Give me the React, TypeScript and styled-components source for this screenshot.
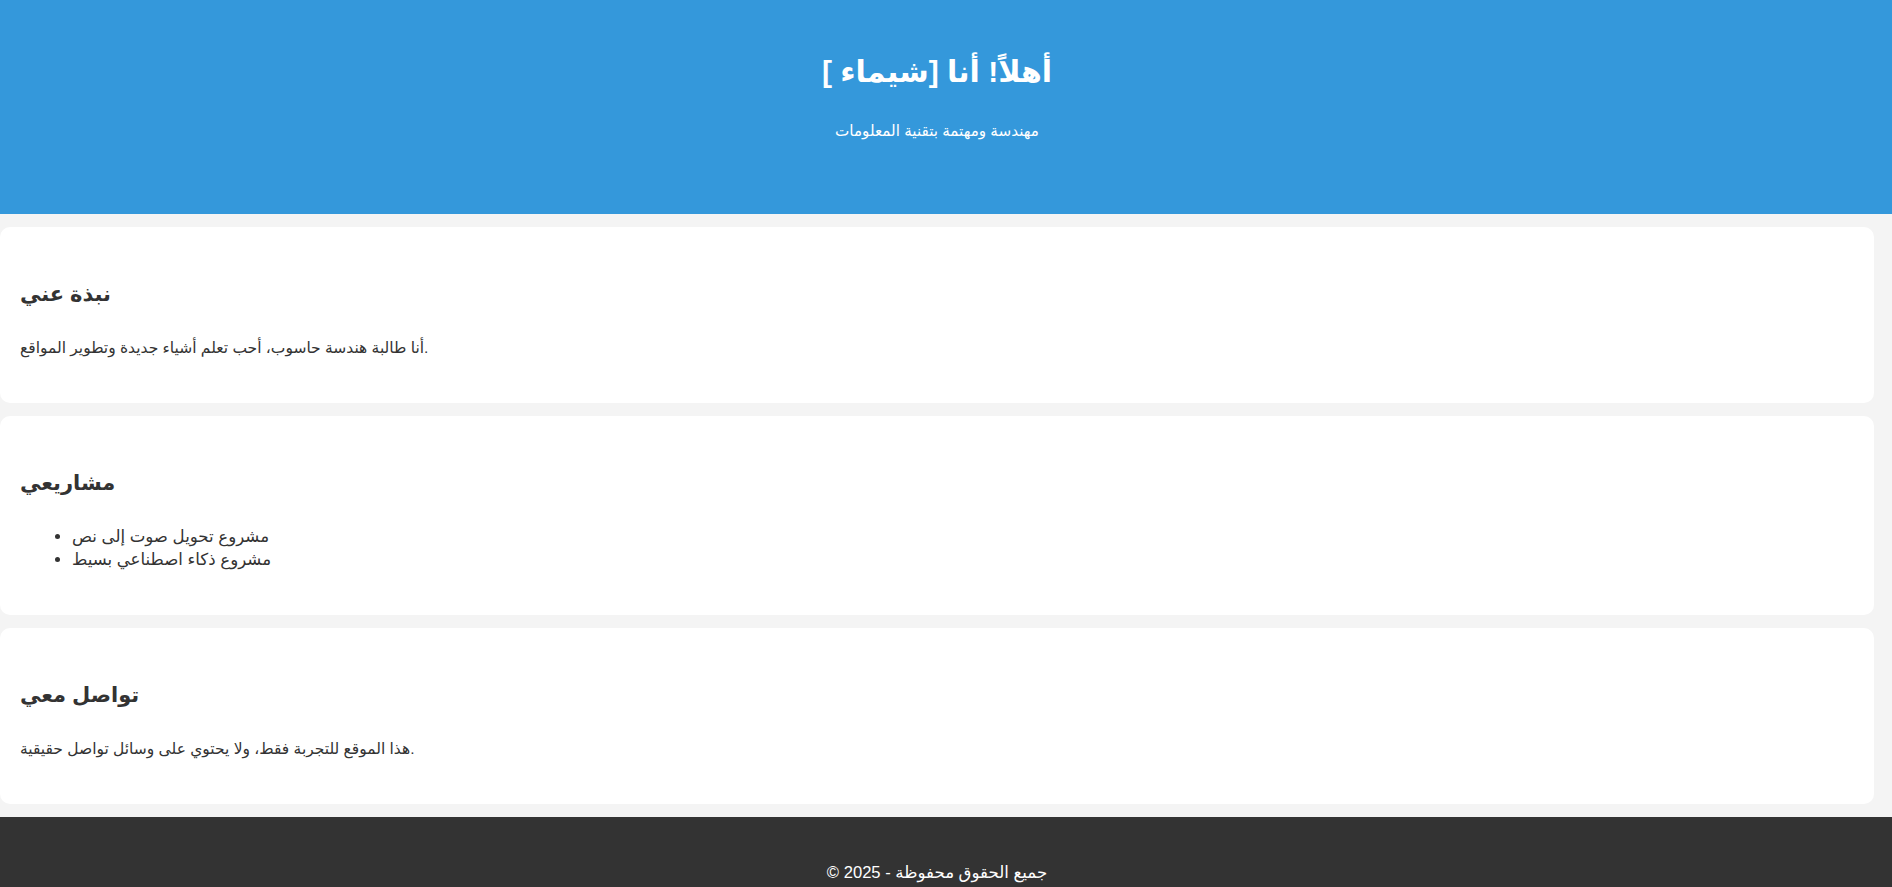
import React from "react";
import styled, { createGlobalStyle } from "styled-components";

const GlobalStyle = createGlobalStyle`
  body {
    margin: 0;
    background: #f4f4f4;
    color: #333;
    font-family: Arial, "Liberation Sans", "DejaVu Sans", sans-serif;
    font-size: 16px;
    line-height: 1.45;
  }
`;

const Header = styled.header`
  background: #3498db;
  color: #fff;
  text-align: center;
  padding: 49px 38px 72px 20px;
`;

const Title = styled.h1`
  margin: 0 0 24px;
  font-size: 30px;
  line-height: 46px;
  font-weight: bold;
`;

const Subtitle = styled.p`
  margin: 0;
  font-size: 15.2px;
  line-height: 23px;
`;

const Main = styled.main`
  display: flex;
  flex-direction: column;
  gap: 13px;
  padding: 13px 18px 13px 0;
`;

const Card = styled.section`
  background: #fff;
  border-radius: 10px;
  padding: 49px 20px 44px;
`;

const CardTitle = styled.h2`
  margin: 0 0 25px;
  font-size: 21px;
  line-height: 35px;
  font-weight: bold;
  color: #333;
`;

const Text = styled.p`
  margin: 0;
  font-size: 15.5px;
  line-height: 23px;
`;

const List = styled.ul`
  margin: 0;
  padding-left: 52px;
  font-size: 16.6px;
  line-height: 23px;
`;

const Footer = styled.footer`
  background: #333;
  color: #fff;
  text-align: center;
  padding: 28px 38px 28px 20px;
`;

const FooterText = styled.p`
  margin: 16px 0;
  font-size: 16.6px;
`;

export default function App() {
  return (
    <>
      <GlobalStyle />
      <Header>
        <Title dir="rtl">أهلاً! أنا [شيماء ]</Title>
        <Subtitle>مهندسة ومهتمة بتقنية المعلومات</Subtitle>
      </Header>
      <Main>
        <Card>
          <CardTitle>نبذة عني</CardTitle>
          <Text>أنا طالبة هندسة حاسوب، أحب تعلم أشياء جديدة وتطوير المواقع.</Text>
        </Card>
        <Card>
          <CardTitle>مشاريعي</CardTitle>
          <List>
            <li>مشروع تحويل صوت إلى نص</li>
            <li>مشروع ذكاء اصطناعي بسيط</li>
          </List>
        </Card>
        <Card>
          <CardTitle>تواصل معي</CardTitle>
          <Text>هذا الموقع للتجربة فقط، ولا يحتوي على وسائل تواصل حقيقية.</Text>
        </Card>
      </Main>
      <Footer>
        <FooterText>© 2025 - جميع الحقوق محفوظة</FooterText>
      </Footer>
    </>
  );
}
